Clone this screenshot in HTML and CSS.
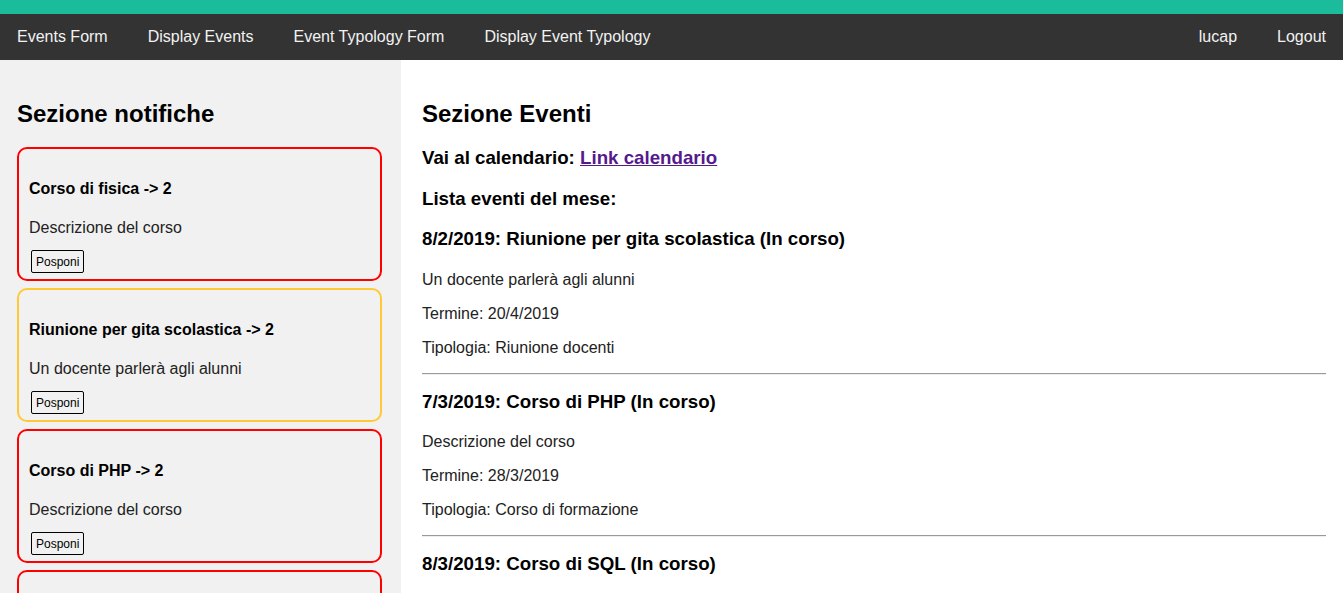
FILE: index.html
```html
<!DOCTYPE html>
<html lang="it">
<head>
<meta charset="utf-8">
<title>Eventi</title>
<link rel="stylesheet" href="styles.css">
</head>
<body>
<div class="topbar"></div>
<nav class="nav">
  <div class="nav-left">
    <a href="#">Events Form</a>
    <a href="#">Display Events</a>
    <a href="#">Event Typology Form</a>
    <a href="#">Display Event Typology</a>
  </div>
  <div class="nav-right">
    <a href="#">lucap</a>
    <a href="#">Logout</a>
  </div>
</nav>
<div class="layout">
  <aside class="sidebar">
    <h2 class="section-title">Sezione notifiche</h2>
    <div class="card card-red">
      <h4 class="card-title">Corso di fisica -&gt; 2</h4>
      <p class="card-desc">Descrizione del corso</p>
      <button class="btn">Posponi</button>
    </div>
    <div class="card card-yellow">
      <h4 class="card-title">Riunione per gita scolastica -&gt; 2</h4>
      <p class="card-desc">Un docente parlerà agli alunni</p>
      <button class="btn">Posponi</button>
    </div>
    <div class="card card-red">
      <h4 class="card-title">Corso di PHP -&gt; 2</h4>
      <p class="card-desc">Descrizione del corso</p>
      <button class="btn">Posponi</button>
    </div>
    <div class="card card-red">
      <h4 class="card-title">Corso di SQL -&gt; 2</h4>
      <p class="card-desc">Descrizione del corso</p>
      <button class="btn">Posponi</button>
    </div>
  </aside>
  <main class="main">
    <h2 class="section-title">Sezione Eventi</h2>
    <h3 class="sub">Vai al calendario: <a class="link" href="#">Link calendario</a></h3>
    <h3 class="sub">Lista eventi del mese:</h3>
    <div class="event">
      <h3 class="sub event-title">8/2/2019: Riunione per gita scolastica (In corso)</h3>
      <p class="line">Un docente parlerà agli alunni</p>
      <p class="line">Termine: 20/4/2019</p>
      <p class="line">Tipologia: Riunione docenti</p>
    </div>
    <hr class="sep">
    <div class="event">
      <h3 class="sub event-title">7/3/2019: Corso di PHP (In corso)</h3>
      <p class="line">Descrizione del corso</p>
      <p class="line">Termine: 28/3/2019</p>
      <p class="line">Tipologia: Corso di formazione</p>
    </div>
    <hr class="sep">
    <div class="event">
      <h3 class="sub event-title">8/3/2019: Corso di SQL (In corso)</h3>
      <p class="line">Descrizione del corso</p>
      <p class="line">Termine: 30/3/2019</p>
      <p class="line">Tipologia: Corso di formazione</p>
    </div>
  </main>
</div>
</body>
</html>
```
FILE: styles.css
```css
html, body {
  margin: 0;
  padding: 0;
}
body {
  font-family: "Liberation Sans", Arial, sans-serif;
  color: #000;
  background: #fff;
  height: 593px;
  overflow: hidden;
}
.topbar {
  height: 14px;
  background: #1abc9c;
}
.nav {
  height: 46px;
  background: #333333;
  display: flex;
  justify-content: space-between;
  align-items: center;
  padding: 0 17px;
}
.nav-left, .nav-right {
  display: flex;
  gap: 40px;
}
.nav a {
  color: #f2f2f2;
  text-decoration: none;
  font-size: 16px;
}
.layout {
  display: flex;
  align-items: stretch;
  min-height: 533px;
}
.sidebar {
  width: 401px;
  flex: none;
  box-sizing: border-box;
  background: #f1f1f1;
  padding: 20px 19px 0 17px;
}
.section-title {
  font-size: 24px;
  font-weight: bold;
  margin: 20px 0 19px;
}
.card {
  border: 2px solid #ff0000;
  border-radius: 10px;
  padding: 8px 10px 6px;
  margin-bottom: 7px;
}
.card-yellow {
  border-color: #ffc935;
}
.card-title {
  font-size: 16px;
  font-weight: bold;
  margin: 23px 0 21px;
  color: #000;
}
.card-desc {
  font-size: 16px;
  margin: 0 0 13px;
  color: #222;
}
.btn {
  display: block;
  margin-left: 2px;
  font-family: "Liberation Sans", Arial, sans-serif;
  font-size: 12px;
  height: 23px;
  padding: 0 4px;
  border: 1px solid #000;
  border-radius: 2px;
  background: transparent;
  color: #000;
}
.main {
  flex: 1;
  padding: 20px 17px 0 21px;
}
.sub {
  font-size: 18.72px;
  line-height: 22px;
  font-weight: bold;
  margin: 18.72px 0;
}
.event-title {
  margin-top: 16px;
  margin-bottom: 20.5px;
}
.link {
  color: #551a8b;
  text-decoration: underline;
}
.line {
  font-size: 16px;
  margin: 16px 0;
  color: #222;
}
.sep {
  border: none;
  border-top: 1px solid #9a9a9a;
  border-bottom: 1px solid #eeeeee;
  margin: 8px 0;
}
```
